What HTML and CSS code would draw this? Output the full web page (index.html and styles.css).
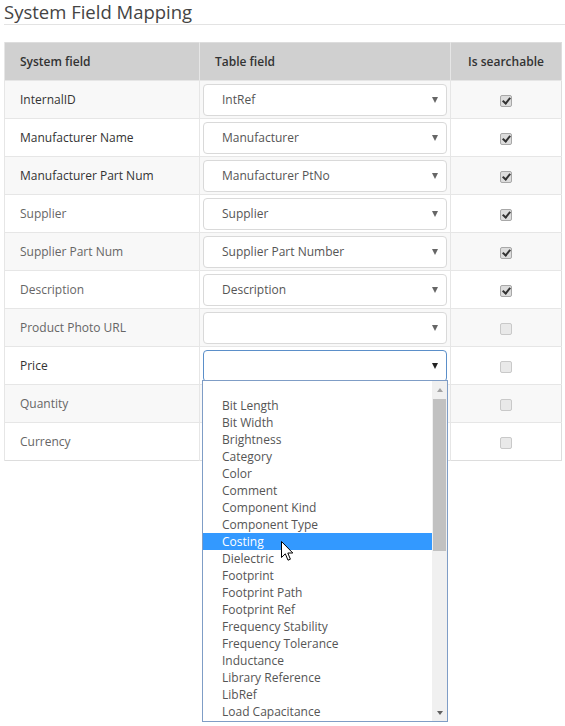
FILE: index.html
```html
<!DOCTYPE html>
<html>
<head>
<meta charset="utf-8">
<link rel="stylesheet" href="styles.css">
</head>
<body>
<div class="page">
  <h1 class="title">System Field Mapping</h1>
  <table class="map">
    <colgroup><col class="c1"><col class="c2"><col class="c3"></colgroup>
    <thead>
      <tr><th>System field</th><th>Table field</th><th class="center">Is searchable</th></tr>
    </thead>
    <tbody>
      <tr class="odd"><td class="req">InternalID</td><td><div class="select"><span>IntRef</span><i class="arrow"></i></div></td><td class="center"><span class="cb on"></span></td></tr>
      <tr><td class="req">Manufacturer Name</td><td><div class="select"><span>Manufacturer</span><i class="arrow"></i></div></td><td class="center"><span class="cb on"></span></td></tr>
      <tr class="odd"><td class="req">Manufacturer Part Num</td><td><div class="select"><span>Manufacturer PtNo</span><i class="arrow"></i></div></td><td class="center"><span class="cb on"></span></td></tr>
      <tr><td>Supplier</td><td><div class="select"><span>Supplier</span><i class="arrow"></i></div></td><td class="center"><span class="cb on"></span></td></tr>
      <tr class="odd"><td>Supplier Part Num</td><td><div class="select"><span>Supplier Part Number</span><i class="arrow"></i></div></td><td class="center"><span class="cb on"></span></td></tr>
      <tr><td>Description</td><td><div class="select"><span>Description</span><i class="arrow"></i></div></td><td class="center"><span class="cb on"></span></td></tr>
      <tr class="odd"><td>Product Photo URL</td><td><div class="select"><span></span><i class="arrow"></i></div></td><td class="center"><span class="cb"></span></td></tr>
      <tr><td class="req">Price</td><td><div class="select open"><span></span><i class="arrow dark"></i></div></td><td class="center"><span class="cb"></span></td></tr>
      <tr class="odd"><td>Quantity</td><td></td><td class="center"><span class="cb"></span></td></tr>
      <tr><td>Currency</td><td></td><td class="center"><span class="cb"></span></td></tr>
    </tbody>
  </table>
  <div class="list">
    <div class="items">
      <div class="spacer"></div>
      <div class="opt">Bit Length</div>
      <div class="opt">Bit Width</div>
      <div class="opt">Brightness</div>
      <div class="opt">Category</div>
      <div class="opt">Color</div>
      <div class="opt">Comment</div>
      <div class="opt">Component Kind</div>
      <div class="opt">Component Type</div>
      <div class="opt sel">Costing</div>
      <div class="opt">Dielectric</div>
      <div class="opt">Footprint</div>
      <div class="opt">Footprint Path</div>
      <div class="opt">Footprint Ref</div>
      <div class="opt">Frequency Stability</div>
      <div class="opt">Frequency Tolerance</div>
      <div class="opt">Inductance</div>
      <div class="opt">Library Reference</div>
      <div class="opt">LibRef</div>
      <div class="opt">Load Capacitance</div>
    </div>
    <div class="scroll">
      <i class="up"></i>
      <div class="thumb"></div>
      <i class="down"></i>
    </div>
    <svg class="cursor" width="13" height="21" viewBox="0 0 13 21"><path d="M0.5 0.5 L0.5 16.5 L4.3 12.8 L7 19.2 L9.4 18.2 L6.8 12 L11.8 12 Z" fill="#fff" stroke="#000" stroke-width="1"/></svg>
  </div>
</div>
</body>
</html>
```
FILE: styles.css
```css
* { box-sizing: border-box; }
html, body { margin: 0; padding: 0; background: #fff; }
body { font-family: "Open Sans", "Noto Sans", sans-serif; color: #555; }
.page { padding: 0 0 0 4px; position: relative; min-height: 726px; }
.title {
  margin: 0;
  font-size: 18.5px;
  font-weight: 400;
  color: #444;
  line-height: 24px;
  border-bottom: 1px solid #e3e3e3;
  height: 25px;
}
.map {
  margin-top: 17px;
  width: 557px;
  border-collapse: collapse;
  table-layout: fixed;
  font-size: 12px;
  border: 1px solid #dddddd;
}
.c1 { width: 195px; }
.c2 { width: 251px; }
.c3 { width: 111px; }
.map th {
  background: #d0d0d0;
  color: #333;
  font-weight: 600;
  text-align: left;
  height: 38px;
  padding: 0 0 0 15px;
  border-left: 1px solid #e6e6e6;
}
.map th.center { text-align: center; padding: 0; }
.map td {
  height: 38px;
  padding: 0 0 0 15px;
  border-top: 1px solid #e6e6e6;
  border-left: 1px solid #e6e6e6;
  color: #666;
}
.map td:nth-child(2) { padding: 0 3px; }
.map td.center { text-align: center; padding: 0; }
.map tr.odd td { background: #f8f8f8; }
.map td.req { color: #333; }
.select {
  height: 32px;
  border: 1px solid #d9d9d9;
  border-radius: 4px;
  background: #fff;
  display: flex;
  align-items: center;
  justify-content: space-between;
  padding: 0 8px 0 18px;
  color: #555;
  font-size: 12px;
}
.select.open { border-color: #5b8fc9; }
.arrow {
  width: 0; height: 0;
  border-left: 3.5px solid transparent;
  border-right: 3.5px solid transparent;
  border-top: 6px solid #666;
}
.arrow.dark { border-top-color: #222; }
.cb {
  display: inline-block;
  width: 12px;
  height: 12px;
  border: 1px solid #c9c9c9;
  border-radius: 2px;
  background: #e9e9e9;
  vertical-align: middle;
  position: relative;
}
.cb.on { background: #dcdcdc; border-color: #a8a8a8; }
.cb.on::after {
  content: "";
  position: absolute;
  left: 3px;
  top: 0px;
  width: 3px;
  height: 6px;
  border-right: 2px solid #333;
  border-bottom: 2px solid #333;
  transform: rotate(40deg);
}
.list {
  position: absolute;
  left: 202px;
  top: 380px;
  width: 246px;
  height: 342px;
  background: #fff;
  border: 1px solid #7f9dc6;
  z-index: 5;
  display: flex;
  font-size: 12px;
}
.items { flex: 1; }
.spacer { height: 16px; }
.opt {
  height: 17px;
  line-height: 17px;
  padding-left: 19px;
  color: #555;
  white-space: nowrap;
}
.opt.sel { background: #3399ff; color: #fff; }
.scroll {
  width: 15px;
  background: #f0f0f0;
  display: flex;
  flex-direction: column;
  align-items: center;
}
.scroll .up, .scroll .down {
  display: block;
  width: 0; height: 0;
  border-left: 3.5px solid transparent;
  border-right: 3.5px solid transparent;
}
.scroll .up { border-bottom: 4px solid #a3a3a3; margin-top: 7px; margin-bottom: 7px; }
.scroll .down { border-top: 4px solid #606060; margin-top: auto; margin-bottom: 6px; }
.thumb { width: 13px; height: 152px; background: #c1c1c1; }
.cursor { position: absolute; left: 78px; top: 160px; }
```
